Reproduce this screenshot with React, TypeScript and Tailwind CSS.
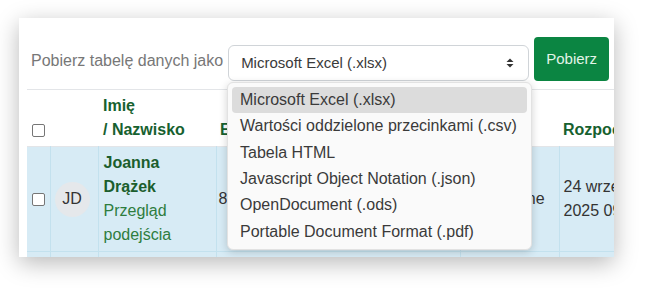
import React from 'react';

const formats = [
  'Microsoft Excel (.xlsx)',
  'Wartości oddzielone przecinkami (.csv)',
  'Tabela HTML',
  'Javascript Object Notation (.json)',
  'OpenDocument (.ods)',
  'Portable Document Format (.pdf)',
];

function Checkbox() {
  return <span className="block w-[13px] h-[13px] bg-white border border-[#767676] rounded-[2px]" />;
}

function SelectArrows() {
  return (
    <svg width="8" height="10" viewBox="0 0 8 10" className="text-[#333]">
      <path d="M4 0.5 L7.5 4 L0.5 4 Z" fill="currentColor" />
      <path d="M4 9.5 L7.5 6 L0.5 6 Z" fill="currentColor" />
    </svg>
  );
}

export default function App() {
  return (
    <div className="w-[649px] h-[292px] bg-white pt-[18px] pl-[19px] font-['Liberation_Sans',Arial,sans-serif]">
      <div className="relative w-[595px] h-[239px] bg-white overflow-hidden shadow-[0_6px_22px_rgba(0,0,0,0.28)]">
        {/* toolbar */}
        <div className="flex items-start pt-[19px] pb-2 pl-3">
          <span className="mt-[12px] text-[16px] leading-6 text-[#777] whitespace-nowrap">Pobierz tabelę danych jako</span>
          <div className="ml-[5px] mt-2 w-[301px] h-[36px] shrink-0 flex items-center justify-between pl-3 pr-[14px] border border-[#d0d4d8] rounded-md bg-white">
            <span className="text-[15px] text-[#3a3a3a]">Microsoft Excel (.xlsx)</span>
            <SelectArrows />
          </div>
          <button className="ml-[5px] w-[75px] h-[44px] shrink-0 rounded-[4px] bg-[#0b8542] text-[15px] text-[#e2f4e8]">
            Pobierz
          </button>
        </div>

        {/* table */}
        <table className="ml-2 w-[720px] table-fixed border-collapse text-[16px] leading-6">
          <colgroup>
            <col className="w-[23px]" />
            <col className="w-[48px]" />
            <col className="w-[118px]" />
            <col className="w-[244px]" />
            <col className="w-[99px]" />
            <col />
          </colgroup>
          <thead>
            <tr className="border-t border-b border-[#e3e5e8] h-[56px]">
              <th className="align-bottom px-[5px] pb-[9px]"><Checkbox /></th>
              <th />
              <th className="align-bottom text-left font-bold text-[#17612f] px-[5px] py-1">Imię<br />/ Nazwisko</th>
              <th className="align-bottom text-left font-bold text-[#17612f] px-1 py-1">Email</th>
              <th className="align-bottom text-left font-bold text-[#17612f] px-1 py-1">Stan</th>
              <th className="align-bottom text-left font-bold text-[#17612f] px-1 py-1 whitespace-nowrap">Rozpoczęto</th>
            </tr>
          </thead>
          <tbody className="bg-[#d7ebf5] text-[#333]">
            <tr className="border-b border-[#c3e1ee]">
              <td className="align-middle px-[5px] border-r border-[#c3e1ee]"><Checkbox /></td>
              <td className="align-middle px-1 border-r border-[#c3e1ee]">
                <span className="flex w-[35px] h-[35px] items-center justify-center rounded-full bg-[#e5e8eb] text-[16px] text-[#333]">JD</span>
              </td>
              <td className="align-top px-[5px] py-1 border-r border-[#c3e1ee]">
                <div className="font-bold text-[#1b5e2d]">Joanna Drążek</div>
                <div className="text-[#2e7d3e]">Przegląd podejścia</div>
              </td>
              <td className="align-middle px-[2px] border-r border-[#c3e1ee]">86,67%</td>
              <td className="align-middle px-1 border-r border-[#c3e1ee]">Ukończone</td>
              <td className="align-middle px-1">24 września<br />2025 09:12</td>
            </tr>
            <tr className="h-[40px]">
              <td className="border-r border-[#c3e1ee]" />
              <td className="border-r border-[#c3e1ee]" />
              <td className="border-r border-[#c3e1ee]" />
              <td className="border-r border-[#c3e1ee]" />
              <td className="border-r border-[#c3e1ee]" />
              <td />
            </tr>
          </tbody>
        </table>

        {/* open select list */}
        <div className="absolute left-[208px] top-[64px] w-[305px] p-1 bg-[#fafafa] border border-[#e2e2e2] rounded-md shadow-[0_2px_8px_rgba(0,0,0,0.18)]">
          {formats.map((f, i) => (
            <div
              key={f}
              className={`h-[26.3px] flex items-center px-2 rounded-[4px] text-[16px] text-[#3a3a3a] whitespace-nowrap ${i === 0 ? 'bg-[#dcdcdc]' : ''}`}
            >
              {f}
            </div>
          ))}
        </div>
      </div>
    </div>
  );
}
